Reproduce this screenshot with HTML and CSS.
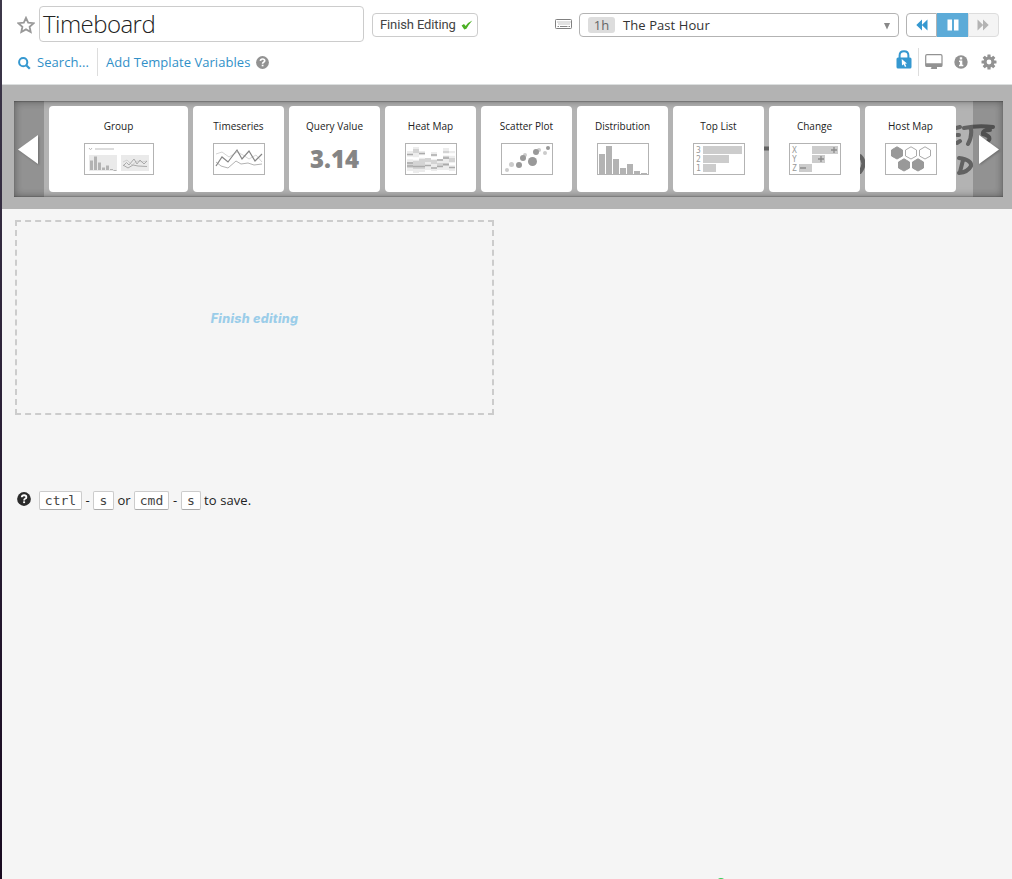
FILE: index.html
```html
<!DOCTYPE html>
<html lang="en">
<head>
<meta charset="utf-8">
<title>Timeboard</title>
<link rel="stylesheet" href="styles.css">
</head>
<body>
<div class="app">
<header class="header">
  <div class="row row-main">
    <svg class="star" width="18" height="18" viewBox="0 0 18 18"><path d="M9 1.800L11.200 6.600 16.600 7.200 12.600 10.800 13.700 16 9 13.400 4.300 16 5.400 10.800 1.400 7.200 6.800 6.600Z" fill="#fff" stroke="#999" stroke-width="1.800"/></svg>
    <div class="title">Timeboard</div>
    <button class="finish">Finish Editing<svg width="12" height="10" viewBox="0 0 12 10"><path d="M.6 5.400L3 4 4.600 5.900Q7 2.200 11.300 .4Q7.900 4.200 5.400 8.800L3.300 9.400Z" fill="#4cb025"/></svg></button>
    <svg class="keyboard" width="18" height="11" viewBox="0 0 18 11"><rect x=".5" y=".5" width="16" height="9" rx=".8" fill="#fff" stroke="#808080"/><path d="M2.500 3H15.500M3.500 5H15.500" stroke="#888" stroke-dasharray="1 1"/><path d="M2.500 7.500H4M5 7.500H12.500M13.500 7.500H15" stroke="#888"/></svg>
    <div class="range"><span class="tag">1h</span><span class="range-name">The Past Hour</span><svg class="caret" width="6" height="7" viewBox="0 0 6 7"><path d="M0 0H6L3 6.500Z" fill="#888"/></svg></div>
    <div class="controls">
      <button class="ctl"><svg width="12" height="12" viewBox="0 0 12 12"><path d="M6 .5V11.500L.3 6ZM11.500 .5V11.500L5.800 6Z" fill="#3598d0"/></svg></button>
      <button class="ctl ctl-on"><svg width="12" height="12" viewBox="0 0 12 12"><path d="M.5 .5H5V11.500H.5ZM7 .5H11.500V11.500H7Z" fill="#fff"/></svg></button>
      <button class="ctl ctl-off"><svg width="12" height="12" viewBox="0 0 12 12"><path d="M.5 .5V11.500L6.200 6ZM6 .5V11.500L11.700 6Z" fill="#b3b3b3"/></svg></button>
    </div>
  </div>
  <div class="row row-sub">
    <a class="search"><svg width="14" height="14" viewBox="0 0 14 14"><circle cx="6.200" cy="6.200" r="4.100" fill="none" stroke="#3598d0" stroke-width="2"/><path d="M9.200 9.200L12.800 12.800" stroke="#3598d0" stroke-width="2.300"/></svg><span class="search-text">Search...</span></a>
    <a class="template">Add Template Variables</a>
    <svg class="help" width="13" height="13" viewBox="0 0 13 13"><circle cx="6.500" cy="6.500" r="6.400" fill="#929292"/><path d="M4.400 4.900Q4.500 3 6.600 3T8.700 4.800Q8.700 5.700 7.500 6.300Q6.600 6.700 6.600 7.800" fill="none" stroke="#fff" stroke-width="1.700"/><path d="M5.700 8.700H7.500V10.300H5.700Z" fill="#fff"/></svg>
    <div class="tools">
      <svg class="lock" width="16" height="19" viewBox="0 0 16 19"><path d="M3.600 9V5.500Q3.600 1.200 8 1.200T12.400 5.500V9" fill="none" stroke="#3598d0" stroke-width="2"/><rect x=".5" y="7.500" width="15" height="11" rx="1.500" fill="#3598d0"/><path d="M5.700 9L11 13.400 9 13.700 10.300 16.300 9 17 7.700 14.300 6 15.400Z" fill="#fff"/></svg>
      <svg class="monitor" width="18" height="16" viewBox="0 0 18 16"><rect x=".7" y=".7" width="16.300" height="11.800" rx="1.300" fill="#fff" stroke="#929292" stroke-width="1.200"/><path d="M.7 9.300H17V11.500Q17 12.500 16 12.500H1.700Q.7 12.500 .7 11.500ZM6 12.500H12V15H5.500L6.500 14Z" fill="#929292"/></svg>
      <svg class="info" width="14" height="14" viewBox="0 0 14 14"><circle cx="7" cy="7" r="6.700" fill="#929292"/><path d="M5.800 2.200H8.200V4.400H5.800ZM5 5.400H8.300V9.800H9.300V11.300H5V9.800H5.900V6.900H5Z" fill="#fff"/></svg>
      <svg class="gear" width="16" height="16" viewBox="-8 -8 16 16"><g fill="#929292"><rect id="tooth" x="-1.600" y="-7.500" width="3.200" height="15" rx=".5"/><use href="#tooth" transform="rotate(45)"/><use href="#tooth" transform="rotate(90)"/><use href="#tooth" transform="rotate(135)"/><circle r="5.500"/></g><circle r="2.400" fill="#fff"/></svg>
    </div>
  </div>
</header>

<section class="tray">
  <div class="strip">
    <svg class="scrawl" width="260" height="96" viewBox="0 0 260 96"><g fill="none" stroke="#626262" stroke-width="4" stroke-linecap="round"><path d="M20 47.500H26M213 27L217 26M214 34H216M214 42L217 40M221 27Q235 24 250 26M228 28Q229 36 225 43M247 29Q239 29 240 33Q248 35 246 39Q244 42 238 43M216 57Q229 59 228 65Q225 71 216 72M220 59L217 71M117 55Q124 62 117 71"/></g></svg>
    <div class="arrow"><svg width="30" height="96" viewBox="0 0 30 96"><path class="tri" d="M4 48.500L24 34V63Z"/></svg></div>
    <div class="cards">
      <div class="card wide"><span class="name">Group</span>
        <svg width="70" height="32" viewBox="0 0 70 32"><rect x=".5" y=".5" width="69" height="31" fill="#fff" stroke="#b3b3b3"/><path d="M5 5L6.500 6.800 8 5" fill="none" stroke="#bbb"/><path d="M11 6H30" stroke="#ddd" stroke-width="2"/><path d="M5 12H33V28H5ZM37 12H65V28H37Z" fill="#eaeaea"/><path d="M6 17.500H9V27H6ZM10 13.500H13V27H10ZM14 19.500H17V27H14ZM18 24.500H21V27H18ZM22 22.500H25V27H22ZM26 26H29V27H26ZM29.500 27H32.500V28H29.500Z" fill="#b3b3b3"/><path d="M39 19L43 17 48 22 53 18 58 19 63 18" fill="none" stroke="#d0d0d0"/><path d="M39 23L42.500 19.500 45 22 50 16 53 21 56 17 60 21 63 18M39 22L44 25 49 22 54 23 63 23.500" fill="none" stroke="#aaa"/></svg>
      </div>
      <div class="card"><span class="name">Timeseries</span>
        <svg width="52" height="32" viewBox="0 0 52 32"><rect x=".5" y=".5" width="51" height="31" fill="#fff" stroke="#b3b3b3"/><path d="M3 11L9 9 16 14 24 9 30 12 36 16 43 12 49 19" fill="none" stroke="#d5d5d5"/><path d="M3 19L8 23 15 25 23 18 28 21 35 20 41 22 49 21" fill="none" stroke="#b3b3b3"/><path d="M3 23L9 14 15 19 24 7 29 16 36 8 42 18 49 11" fill="none" stroke="#858585" stroke-width="1.200"/></svg>
      </div>
      <div class="card"><span class="name">Query Value</span><span class="value">3.14</span></div>
      <div class="card"><span class="name">Heat Map</span>
        <svg width="52" height="32" viewBox="0 0 52 32"><rect x=".5" y=".5" width="51" height="31" fill="#fff" stroke="#b3b3b3"/><path d="M2 8H8V28H2ZM8 4H14V30H8ZM14 8H20V29H14ZM20 15H26V27H20ZM26 9H32V28H26ZM32 16H38V27H32ZM38 5H44V27H38ZM44 8H50V28H44Z" fill="#ececec"/><path d="M2 19H8V25H2ZM8 6H14V10H8ZM8 18H14V26H8ZM14 16H20V26H14ZM20 15H26V19H20ZM26 17H32V21H26ZM38 8H44V16H38ZM44 15H50V19H44ZM32 20H44V23H32Z" fill="#d4d4d4"/><path d="M8 15.500H14M14 13.500H20M2 15H8M26 15H32M38 11.500H44M44 11.500H50M44 21H50" stroke="#fff" stroke-width="2.500"/><path d="M2 11.500H8M14 10.500H20M26 12H32M2 20H8M8 23.500H20M2 23H8M20 22.500H26M26 25H32M32 23.500H38M32 17H38M38 15H44M38 21.500H44M44 24.500H50" stroke="#ababab" stroke-width="1.500"/></svg>
      </div>
      <div class="card"><span class="name">Scatter Plot</span>
        <svg width="52" height="32" viewBox="0 0 52 32"><rect x=".5" y=".5" width="51" height="31" fill="#fff" stroke="#b3b3b3"/><g fill="#ccc"><circle cx="6" cy="27" r="2"/><circle cx="10.500" cy="21.500" r="2.500"/><circle cx="24" cy="12" r="2"/><circle cx="38" cy="7" r="2"/><circle cx="44" cy="10" r="2"/></g><g fill="#999"><circle cx="18" cy="22" r="3"/><circle cx="22" cy="15" r="3"/><circle cx="31.500" cy="18.500" r="4.500"/><circle cx="35" cy="9" r="3"/><circle cx="47" cy="5" r="2"/></g></svg>
      </div>
      <div class="card"><span class="name">Distribution</span>
        <svg width="52" height="32" viewBox="0 0 52 32"><rect x=".5" y=".5" width="51" height="31" fill="#fff" stroke="#b3b3b3"/><path d="M2 11H8V31H2ZM9 3H15V31H9ZM16 16H22V31H16ZM23 25H29V31H23ZM30 21H36V31H30ZM37 28H43V31H37ZM44 30H50V31H44Z" fill="#b3b3b3"/></svg>
      </div>
      <div class="card"><span class="name">Top List</span>
        <svg class="labelled" width="52" height="32" viewBox="0 0 52 32"><rect x=".5" y=".5" width="51" height="31" fill="#fff" stroke="#b3b3b3"/><path d="M10 3H49V11H10ZM10 12H36V20H10ZM10 21H23V29H10Z" fill="#ccc"/><text x="3" y="10">3</text><text x="3" y="19">2</text><text x="3" y="28">1</text></svg>
      </div>
      <div class="card"><span class="name">Change</span>
        <svg class="labelled" width="52" height="32" viewBox="0 0 52 32"><rect x=".5" y=".5" width="51" height="31" fill="#fff" stroke="#b3b3b3"/><path d="M23 3H49V11H23ZM23 12H36V20H23ZM10 21H23V29H10Z" fill="#ccc"/><text x="3" y="10">X</text><text x="3" y="19">Y</text><text x="3" y="28">Z</text><path d="M42 7H48M45 4V10M29 16H35M32 13V19M11 25H17" stroke="#8c8c8c" stroke-width="1.300"/></svg>
      </div>
      <div class="card"><span class="name">Host Map</span>
        <svg width="52" height="32" viewBox="0 0 52 32"><rect x=".5" y=".5" width="51" height="31" fill="#fff" stroke="#b3b3b3"/><g fill="#999" stroke="#999"><path id="hex" d="M12 3.800L17.500 7V13L12 16 6.500 13V7Z"/><use href="#hex" x="7" y="12"/><use href="#hex" x="21" y="12"/></g><path d="M26 3.800L31.500 7V13L26 16 20.500 13V7ZM40 3.800L45.500 7V13L40 16 34.500 13V7Z" fill="#fff" stroke="#aaa"/></svg>
      </div>
    </div>
    <div class="arrow arrow-next"><svg width="30" height="96" viewBox="0 0 30 96"><path class="tri" d="M26 48.500L6 34V63Z"/></svg></div>
  </div>
</section>

<main class="board">
  <div class="drop">Finish editing</div>
  <div class="hint">
    <svg width="14" height="14" viewBox="0 0 13 13"><circle cx="6.500" cy="6.500" r="6.400" fill="#2b2b2b"/><path d="M4.400 4.900Q4.500 3 6.600 3T8.700 4.800Q8.700 5.700 7.500 6.300Q6.600 6.700 6.600 7.800" fill="none" stroke="#fff" stroke-width="1.700"/><path d="M5.700 8.700H7.500V10.300H5.700Z" fill="#fff"/></svg>
    <kbd class="k-ctrl">ctrl</kbd><span class="dash">-</span><kbd class="k-s">s</kbd><span class="or">or</span><kbd class="k-cmd">cmd</kbd><span class="dash dash-wide">-</span><kbd class="k-s2">s</kbd><span class="save">to save.</span>
  </div>
</main>
<i class="status"></i>
</div>
</body>
</html>
```
FILE: styles.css
```css
* { box-sizing: border-box; }
body { margin: 0; font-family: "Open Sans", sans-serif; font-size: 13px; color: #333; background: #f5f5f5; }
svg { display: block; flex: none; }
button { font: inherit; color: inherit; padding: 0; margin: 0; }
.app { position: relative; height: 879px; overflow: hidden; padding-left: 2px; background: linear-gradient(#3d384a, #2a1f36 50%, #180a20) 0 0 / 2px 100% no-repeat #f5f5f5; }
.header { height: 85px; background: #fff; border-bottom: 1px solid #dcdfdf; padding: 6px 13px 0 15px; }
.row { display: flex; }
.row-main { height: 36px; align-items: center; }
.star { margin-right: 4px; margin-top: 2px; }
.title { width: 325px; height: 36px; border: 1px solid #ccc; border-radius: 4px; padding-left: 3px; font-size: 24px; font-weight: 350; letter-spacing: -.55px; line-height: 34px; color: #222; }
.finish { display: flex; align-items: center; justify-content: space-between; width: 106px; height: 24px; margin: 2px auto 0 8px; padding: 0 4px 2px 7px; background: #fff; border: 1px solid #ccc; border-radius: 4px; font: 13px Roboto, sans-serif; letter-spacing: -.12px; white-space: nowrap; color: #444; }
.finish svg { margin-top: 1px; }
.keyboard { margin-right: 6px; }
.range { display: flex; align-items: center; width: 320px; height: 24px; margin-top: 2px; padding: 0 8px; border: 1px solid #b3b3b3; border-radius: 4px; }
.tag { width: 27px; height: 16px; line-height: 16px; text-align: center; background: #ddd; border-radius: 3px; color: #666; margin-right: 8px; }
.range-name { flex: 1; letter-spacing: .08px; }
.caret { margin-top: 2px; }
.controls { display: flex; width: 93px; height: 24px; margin: 2px 0 0 7px; }
.ctl { display: flex; align-items: center; justify-content: center; width: 31px; background: #fff; border: 1px solid #b3b3b3; border-radius: 4px 0 0 4px; }
.ctl-on { background: #5cabd8; border-color: #5cabd8; border-radius: 0; }
.ctl-off { background: #f4f4f4; border-color: #ddd; border-radius: 0 4px 4px 0; padding-right: 2px; }
.row-sub { height: 28px; margin-top: 6px; align-items: center; color: #3190c8; letter-spacing: .05px; }
.search { display: flex; align-items: center; width: 81px; height: 28px; border-right: 1px solid #ddd; }
.search svg { margin-top: 1px; }
.search-text { margin-left: 6px; }
.template { margin-left: 8px; }
.help { margin: 1px auto 0 6px; }
.tools { display: flex; align-items: center; }
.lock { margin: -5px 6px 0 0; }
.monitor { box-sizing: content-box; border-left: 1px solid #ddd; padding: 6px 11px 6px 6px; }
.gear { margin: 0 2px 0 13px; }
.tray { height: 124px; background: #b3b3b3; padding: 16px 9px 12px 12px; }
.strip { position: relative; height: 96px; display: flex; box-shadow: inset 0 0 8px rgba(0,0,0,.4), inset 0 1px 1px rgba(0,0,0,.2), inset 0 -1px 1px rgba(0,0,0,.15); }
.scrawl { position: absolute; right: 0; top: 0; }
.arrow { width: 30px; background: rgba(0,0,0,.18); position: relative; }
.arrow-next { margin-left: auto; }
.tri { fill: #fff; filter: drop-shadow(1px 1px 1px rgba(0,0,0,.25)); }
.cards { position: relative; display: flex; gap: 5px; padding: 5px 0 5px 5px; }
.card { width: 91px; height: 86px; background: #fff; border-radius: 4px; display: flex; flex-direction: column; align-items: center; padding-top: 12px; }
.wide { width: 139px; }
.name { font-size: 10px; line-height: 16px; margin-bottom: 9px; color: #222; }
.value { font-size: 24px; line-height: 32px; font-weight: 800; color: #858585; }
.labelled text { font: 8px "DejaVu Sans Mono", monospace; fill: #999; }
.board { padding: 11px 13px; }
.drop { width: 479px; height: 195px; border: 2px dashed #ccc; display: flex; align-items: center; justify-content: center; font: italic 800 12.500px Inter, sans-serif; letter-spacing: .3px; padding-top: 2px; color: #9bcde9; }
.hint { display: flex; align-items: center; margin-top: 76px; height: 19px; padding-left: 2px; color: #222; }
.hint svg { margin: -3px 8px 0 0; }
.hint span { margin-top: -2px; }
kbd { height: 19px; font: 13px/17px "DejaVu Sans Mono", monospace; text-align: center; background: #fff; border: 1px solid #ccc; border-bottom-color: #aaa; border-radius: 2px; color: #444; }
.k-ctrl { width: 43px; }
.k-s { width: 21px; }
.k-s2 { width: 20px; }
.k-cmd { width: 35px; }
.dash { width: 11px; text-align: center; }
.dash-wide { width: 12px; }
.or { width: 20px; text-align: center; }
.save { margin-left: 3px; letter-spacing: .1px; }
.status { position: absolute; left: 716px; top: 878px; width: 10px; height: 10px; border-radius: 50%; background: #3c5; }
```
